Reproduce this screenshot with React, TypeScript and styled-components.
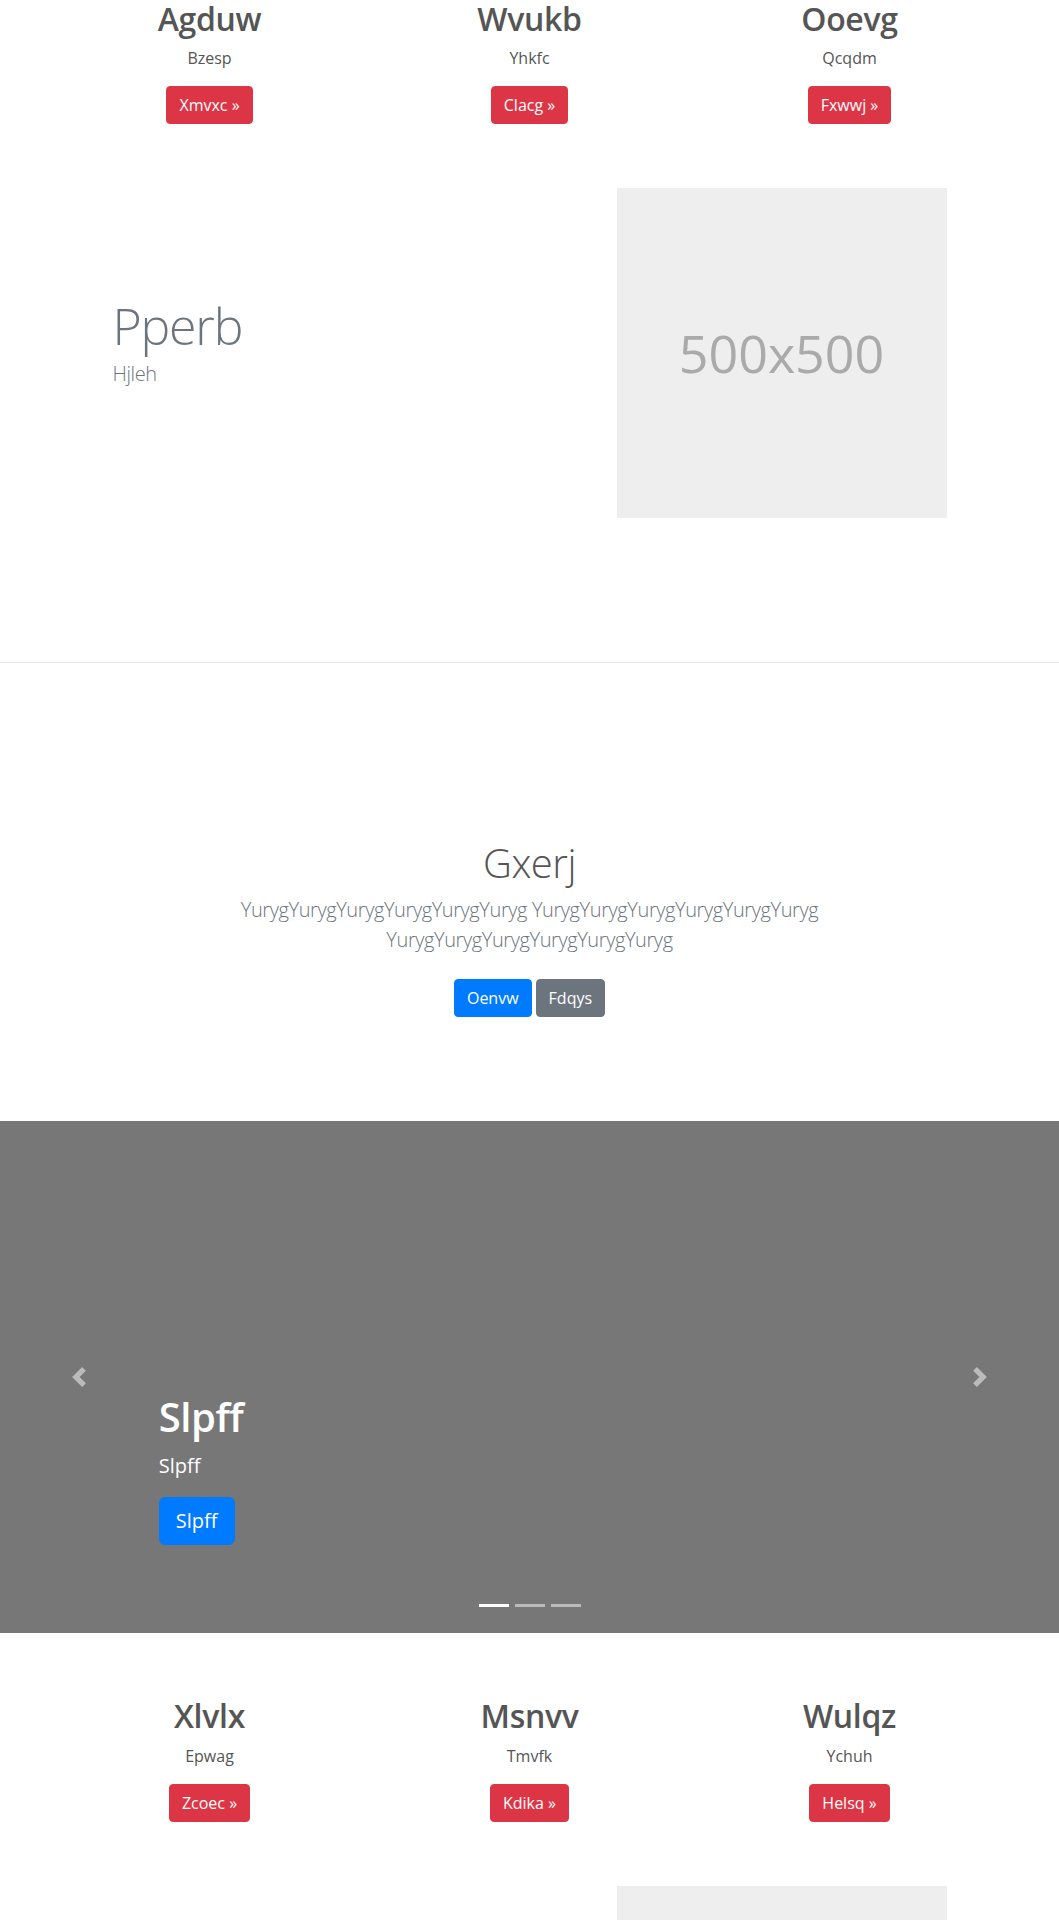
import React from "react";
import styled, { createGlobalStyle } from "styled-components";

const GlobalStyle = createGlobalStyle`
  * { box-sizing: border-box; }
  html, body { margin: 0; padding: 0; background: #fff; }
  body {
    font-family: "Open Sans", "Noto Sans", sans-serif;
    font-size: 16px;
    line-height: 1.5;
    color: #212529;
  }
`;

const variants = {
  danger: "#dc3545",
  primary: "#007bff",
  secondary: "#6c757d",
};

type Variant = keyof typeof variants;

const Button = styled.a<{ $variant: Variant; $lg?: boolean }>`
  display: inline-block;
  font-weight: 400;
  color: #fff;
  text-align: center;
  vertical-align: middle;
  background-color: ${(p) => variants[p.$variant]};
  border: 1px solid ${(p) => variants[p.$variant]};
  padding: ${(p) => (p.$lg ? "8px 16px" : "6px 12px")};
  font-size: ${(p) => (p.$lg ? "20px" : "16px")};
  line-height: 1.5;
  border-radius: ${(p) => (p.$lg ? "6px" : "4px")};
  text-decoration: none;
  cursor: pointer;
`;

/* ---------- marketing columns ---------- */

const Marketing = styled.section<{ $top?: number }>`
  width: 960px;
  margin: ${(p) => p.$top ?? 0}px auto 0;
  display: grid;
  grid-template-columns: repeat(3, 1fr);
`;

const Col = styled.div`
  padding: 0 15px;
  text-align: center;
`;

const ColHeading = styled.h2`
  margin: 0 0 8px;
  font-size: 32px;
  font-weight: 600;
  line-height: 1.2;
  letter-spacing: -0.3px;
  color: #555;
`;

const ColText = styled.p`
  margin: 0 12px 16px;
  color: #555;
`;

const ColAction = styled.p`
  margin: 0 0 16px;
`;

/* ---------- featurette ---------- */

const Featurette = styled.section<{ $divider?: boolean }>`
  border-bottom: ${(p) => (p.$divider ? "1px solid #e6e6e6" : "none")};
  padding-bottom: ${(p) => (p.$divider ? 96 : 0)}px;
`;

const FeatureRow = styled.div`
  width: 960px;
  margin: 0 auto;
  padding: 48px 63px;
  display: grid;
  grid-template-columns: 1fr 1fr;
  align-items: center;
`;

const FeatureText = styled.div``;

const FeatureHeading = styled.h2`
  margin: 0 0 8px;
  font-size: 50px;
  font-weight: 300;
  line-height: 1;
  letter-spacing: -1.2px;
  color: #6c757d;
`;

const Lead = styled.p<{ $center?: boolean }>`
  margin: ${(p) => (p.$center ? "0 auto 24px" : "0 0 16px")};
  max-width: ${(p) => (p.$center ? "660px" : "none")};
  font-size: 20px;
  font-weight: 300;
  line-height: 1.5;
  letter-spacing: -0.4px;
  color: #6c757d;
`;

const Placeholder = styled.div`
  justify-self: end;
  width: 330px;
  height: 330px;
  background: #eee;
  color: #aaa;
  font-size: 52px;
  display: flex;
  align-items: center;
  justify-content: center;
`;

/* ---------- hero ---------- */

const Hero = styled.section`
  padding: 176px 15px 104px;
  text-align: center;
`;

const HeroTitle = styled.h1`
  margin: 0 0 8px;
  font-size: 40px;
  font-weight: 300;
  line-height: 1.2;
  letter-spacing: -0.5px;
  color: #555;
`;

const HeroActions = styled.div`
  display: flex;
  justify-content: center;
  gap: 4px;
`;

/* ---------- carousel ---------- */

const Carousel = styled.section`
  position: relative;
  height: 512px;
  background: #777;
  overflow: hidden;
`;

const Control = styled.a<{ $side: "left" | "right" }>`
  position: absolute;
  top: 0;
  bottom: 0;
  ${(p) => p.$side}: 0;
  width: 15%;
  display: flex;
  align-items: center;
  justify-content: center;
  opacity: 0.5;
`;

const Caption = styled.div`
  position: absolute;
  left: 15%;
  right: 15%;
  bottom: 52px;
  padding: 20px 0;
  color: #fff;
  text-align: left;
`;

const CaptionTitle = styled.h1`
  margin: 0 0 10px;
  font-size: 40px;
  font-weight: 600;
  line-height: 1.2;
  letter-spacing: -0.5px;
`;

const CaptionText = styled.p`
  margin: 0 0 16px;
  font-size: 20px;
  line-height: 1.5;
`;

const CaptionAction = styled.p`
  margin: 0 0 16px;
`;

const Indicators = styled.ol`
  position: absolute;
  left: 0;
  right: 0;
  bottom: 26px;
  margin: 0;
  padding: 0;
  list-style: none;
  display: flex;
  justify-content: center;
  gap: 6px;
`;

const Indicator = styled.li<{ $active?: boolean }>`
  width: 30px;
  height: 3px;
  background: ${(p) => (p.$active ? "#fff" : "rgba(255,255,255,0.5)")};
`;

const Chevron = ({ dir }: { dir: "prev" | "next" }) => (
  <svg width="20" height="20" viewBox="0 0 8 8" fill="#fff" aria-hidden="true">
    <path
      d={
        dir === "prev"
          ? "M5.25 0l-4 4 4 4 1.5-1.5L4.25 4l2.5-2.5L5.25 0z"
          : "M2.75 0l-1.5 1.5L3.75 4l-2.5 2.5L2.75 8l4-4-4-4z"
      }
    />
  </svg>
);

type Card = { title: string; text: string; action: string };

const topCards: Card[] = [
  { title: "Agduw", text: "Bzesp", action: "Xmvxc" },
  { title: "Wvukb", text: "Yhkfc", action: "Clacg" },
  { title: "Ooevg", text: "Qcqdm", action: "Fxwwj" },
];

const bottomCards: Card[] = [
  { title: "Xlvlx", text: "Epwag", action: "Zcoec" },
  { title: "Msnvv", text: "Tmvfk", action: "Kdika" },
  { title: "Wulqz", text: "Ychuh", action: "Helsq" },
];

const MarketingRow = ({ cards, top }: { cards: Card[]; top?: number }) => (
  <Marketing $top={top}>
    {cards.map((c) => (
      <Col key={c.title}>
        <ColHeading>{c.title}</ColHeading>
        <ColText>{c.text}</ColText>
        <ColAction>
          <Button $variant="danger" href="#">
            {c.action} »
          </Button>
        </ColAction>
      </Col>
    ))}
  </Marketing>
);

const word = "Yuryg".repeat(6);

export default function App() {
  return (
    <>
      <GlobalStyle />
      <MarketingRow cards={topCards} />

      <Featurette $divider>
        <FeatureRow>
          <FeatureText>
            <FeatureHeading>Pperb</FeatureHeading>
            <Lead>Hjleh</Lead>
          </FeatureText>
          <Placeholder>500x500</Placeholder>
        </FeatureRow>
      </Featurette>

      <Hero>
        <HeroTitle>Gxerj</HeroTitle>
        <Lead $center>
          {word} {word} {word}
        </Lead>
        <HeroActions>
          <Button $variant="primary" href="#">
            Oenvw
          </Button>
          <Button $variant="secondary" href="#">
            Fdqys
          </Button>
        </HeroActions>
      </Hero>

      <Carousel>
        <Caption>
          <CaptionTitle>Slpff</CaptionTitle>
          <CaptionText>Slpff</CaptionText>
          <CaptionAction>
            <Button $variant="primary" $lg href="#">
              Slpff
            </Button>
          </CaptionAction>
        </Caption>
        <Control $side="left" href="#">
          <Chevron dir="prev" />
        </Control>
        <Control $side="right" href="#">
          <Chevron dir="next" />
        </Control>
        <Indicators>
          <Indicator $active />
          <Indicator />
          <Indicator />
        </Indicators>
      </Carousel>

      <MarketingRow cards={bottomCards} top={64} />

      <Featurette>
        <FeatureRow>
          <FeatureText />
          <Placeholder />
        </FeatureRow>
      </Featurette>
    </>
  );
}
